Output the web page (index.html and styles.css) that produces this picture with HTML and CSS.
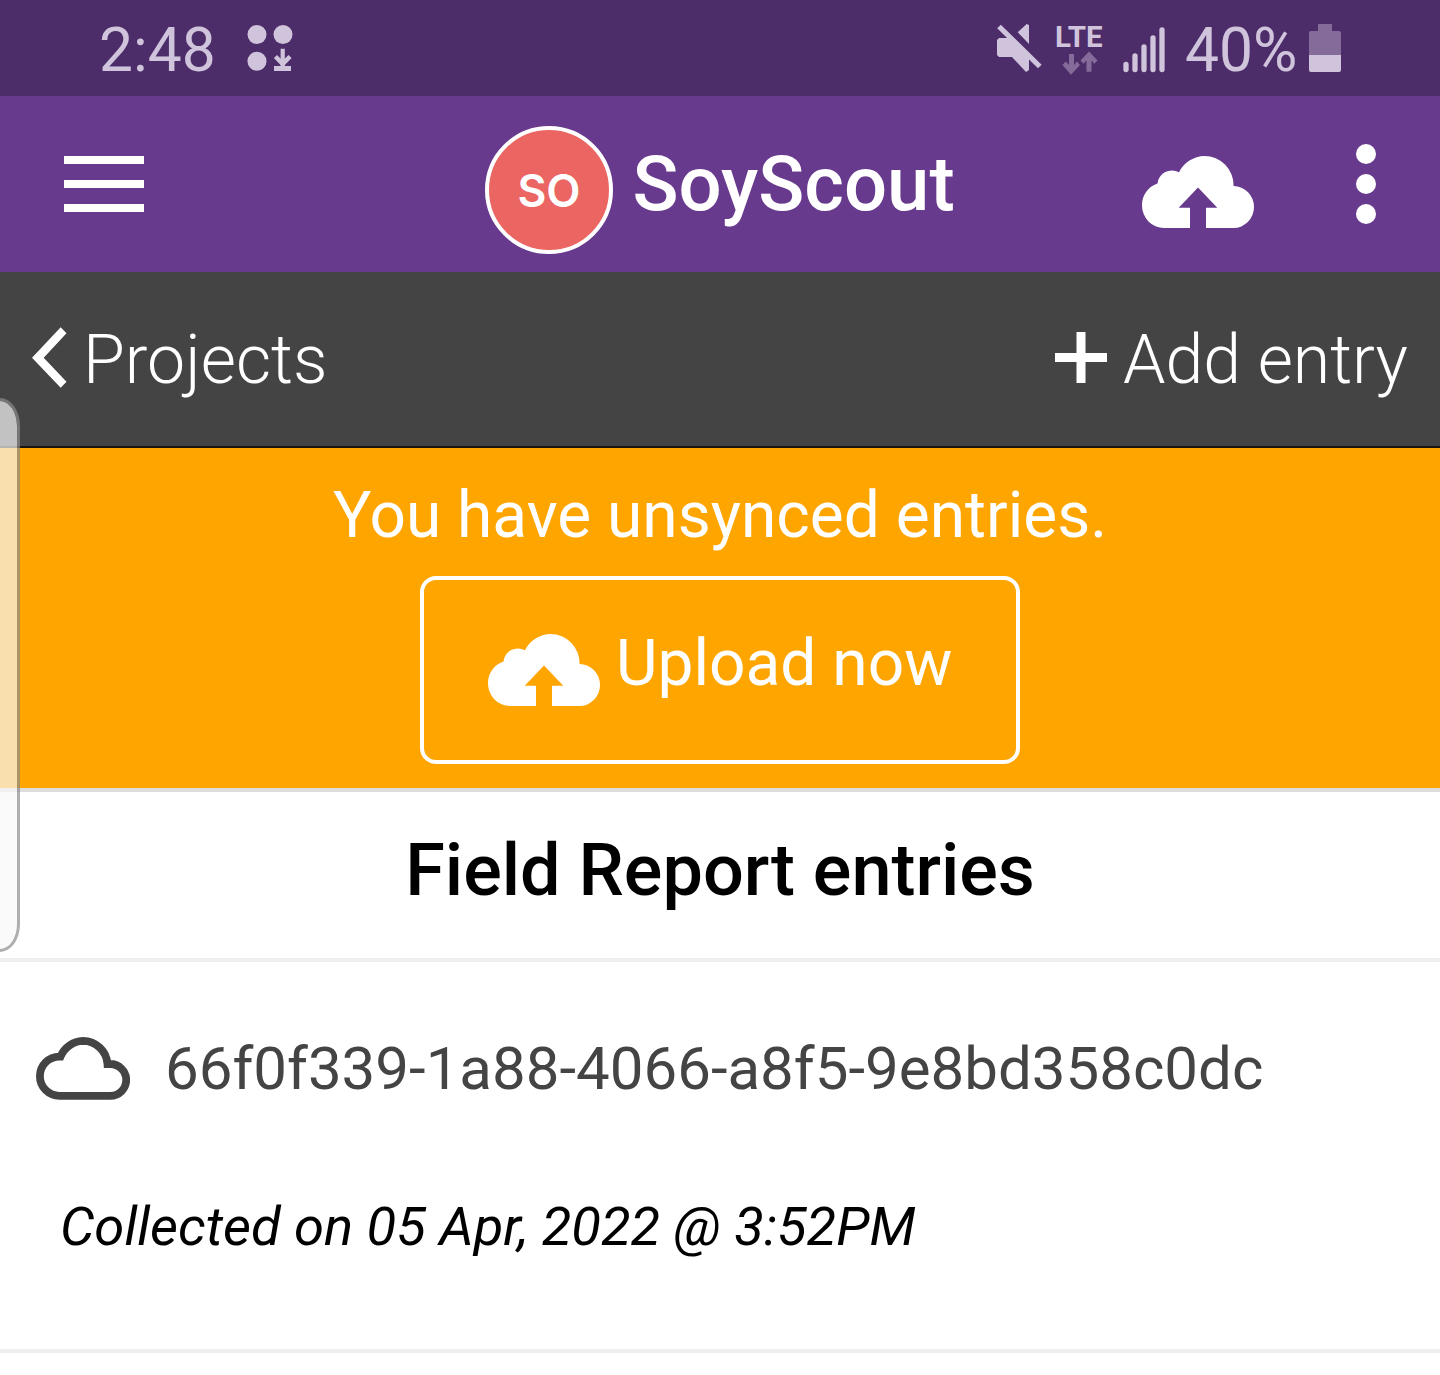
FILE: index.html
```html
<!DOCTYPE html>
<html lang="en">
<head>
<meta charset="utf-8">
<title>SoyScout</title>
<link rel="stylesheet" href="styles.css">
</head>
<body>
<header class="status">
  <span class="time">2:48</span>
  <svg class="dots" width="48" height="50" viewBox="0 0 48 50" fill="#d0c4dc"><circle cx="10" cy="10.500" r="9.500"/><circle cx="36" cy="10.500" r="9.500"/><circle cx="10" cy="37.300" r="9.500"/><path d="M33.600 24.700h4.200V42h-4.200zM27 42h17v5H27z"/><path d="M28.500 32.500l7.200 7.500 7.300-7.500" fill="none" stroke="#d0c4dc" stroke-width="4.500"/></svg>
  <svg class="mute" width="48" height="50" viewBox="0 0 48 50" fill="#d0c4dc"><path d="M1 16L3 14h11l19 19v13l-3 2L16 33H3l-2-2zM21.700 8.300L30.700 0 33 1v19z"/><path d="M3 2.500L43.800 42.500" stroke="#d0c4dc" stroke-width="5.200"/></svg>
  <div class="lte"><span>LTE</span><svg width="36" height="24" viewBox="0 0 36 24" fill="#846b99"><path d="M7 3h5v11l3-3.500 3 3.500-9 9.700L.5 14l3.200-3.500L7 14zM24.500 20.700V9.500l-3 3.300-3-3.300L27 .5l8.500 9-3.200 3.300-2.800-3.300v11.200z"/></svg></div>
  <svg class="signal" width="42" height="46" viewBox="0 0 42 46" stroke="#d0c4dc" stroke-width="5.300" stroke-linecap="round"><path d="M3 37.500v5M12 29v13.500M21 20v22.500M30 11v31.500M39 3v39.500"/></svg>
  <span class="percent">40%</span>
  <svg class="battery" width="32" height="48" viewBox="0 0 32 48"><path d="M9 0h14v7h7q2 0 2 2v22H0V9q0-2 2-2h7z" fill="#846b99"/><path d="M0 31h32v15q0 2-2 2H2q-2 0-2-2z" fill="#d0c4dc"/></svg>
</header>
<nav class="appbar">
  <svg class="menu" width="80" height="56" viewBox="0 0 80 56" fill="#fff"><path d="M0 0h80v8H0zM0 24h80v8H0zM0 48h80v8H0z"/></svg>
  <div class="avatar"><span>SO</span></div>
  <h1 class="brand">SoyScout</h1>
  <svg class="upload" width="112" height="72" viewBox="0 0 112 72" fill="#fff"><path d="M48 72H22A22 22.500 0 0 1 0 49.500A22.500 22.500 0 0 1 15.500 27.500A14.500 14.500 0 0 1 37 16.300A29.200 29.200 0 0 1 62.500 0A29.200 29.500 0 0 1 91.600 30A21 21 0 0 1 112 51A20.500 21 0 0 1 91.500 72H64V51.800H75.300L56 31.500 36.700 51.800H48z"/></svg>
  <svg class="more" width="20" height="80" viewBox="0 0 20 80" fill="#fff"><circle cx="10" cy="10" r="10"/><circle cx="10" cy="40" r="10"/><circle cx="10" cy="70" r="10"/></svg>
</nav>
<div class="toolbar">
  <svg class="back" width="36" height="62" viewBox="0 0 36 62"><path d="M0 30.700L28.700.3l5.800 6L11.700 30.700l22.800 24-5.800 6z" fill="#fff"/></svg>
  <span class="projects">Projects</span>
  <svg class="plus" width="52" height="52" viewBox="0 0 52 52"><path d="M26 0v51M0 25.500h52" stroke="#fff" stroke-width="9"/></svg>
  <span class="add">Add entry</span>
</div>
<section class="notice">
  <p class="message">You have unsynced entries.</p>
  <button class="button">
    <svg class="cloud-up" width="112" height="72" viewBox="0 0 112 72" fill="#fff"><path d="M48 72H22A22 22.500 0 0 1 0 49.500A22.500 22.500 0 0 1 15.500 27.500A14.500 14.500 0 0 1 37 16.300A29.200 29.200 0 0 1 62.500 0A29.200 29.500 0 0 1 91.600 30A21 21 0 0 1 112 51A20.500 21 0 0 1 91.500 72H64V51.800H75.300L56 31.500 36.700 51.800H48z"/></svg>
    <span>Upload now</span>
  </button>
</section>
<h2 class="heading">Field Report entries</h2>
<article class="entry">
  <div class="row">
    <svg class="cloud" width="94" height="63" viewBox="0 0 94 63"><path d="M23.500 58.800A19.600 19.600 0 0 1 23.500 19.600H24.500A25.500 25.500 0 0 1 47 3.900A24.700 24.700 0 0 1 71.500 27H74.300A15.900 15.900 0 0 1 74.300 58.800z" fill="none" stroke="#444" stroke-width="7.800"/></svg>
    <span class="uuid">66f0f339-1a88-4066-a8f5-9e8bd358c0dc</span>
  </div>
  <p class="date">Collected on 05 Apr, 2022 @ 3:52PM</p>
</article>
<div class="edge"></div>
</body>
</html>
```
FILE: styles.css
```css
* { box-sizing: border-box; }
body { margin: 0; width: 1440px; height: 1375px; overflow: hidden; position: relative; background: #fff; color: #000; font-family: Roboto, sans-serif; }
h1, h2, p { margin: 0; font-weight: 400; }
svg { display: block; flex: none; }
span, p, h1, h2 { white-space: nowrap; }
.status { height: 96px; display: flex; align-items: flex-start; background: #4d2d69; color: #d0c4dc; }
.time { font-size: 60.5px; line-height: 70px; margin: 16px 0 0 99px; width: 148px; }
.dots { margin-top: 24px; }
.mute { margin: 24px 0 0 701px; }
.lte { width: 50px; margin: 22px 0 0 11px; font-size: 29.5px; line-height: 30px; font-weight: 700; }
.lte span { display: block; height: 29px; }
.lte svg { margin: 0 0 0 7px; }
.signal { margin: 27px 0 0 17.5px; }
.percent { font-size: 60.5px; line-height: 70px; margin: 16px 0 0 20.5px; width: 124px; }
.battery { margin-top: 24px; }
.appbar { height: 176px; display: flex; align-items: flex-start; background: #673a8e; color: #fff; }
.menu { margin: 60px 0 0 64px; }
.avatar { width: 128px; height: 128px; margin: 30px 0 0 341px; padding-top: 2px; border: 4px solid #fff; border-radius: 50%; background: #eb6662; font-family: Inter, sans-serif; font-size: 44.5px; font-weight: 600; display: flex; align-items: center; justify-content: center; }
.brand { font-size: 76px; line-height: 90px; font-weight: 500; margin: 43px 0 0 19.5px; width: 509.5px; }
.upload { margin-top: 60px; }
.more { margin: 48px 0 0 102px; }
.toolbar { height: 176px; display: flex; align-items: flex-start; background: #444; border-bottom: 2px solid #1c140c; color: #fff; font-size: 68px; line-height: 82px; font-weight: 300; }
.back { margin: 55px 0 0 32px; }
.projects { margin: 47px 0 0 15px; width: 972px; }
.plus { margin-top: 60px; }
.add { margin: 47px 0 0 16px; }
.notice { height: 344px; padding-top: 30px; display: flex; flex-direction: column; align-items: center; background: #ffa500; border-bottom: 4px solid #ddd; color: #fff; }
.message { font-size: 64px; line-height: 76px; }
.button { width: 600px; height: 188px; margin-top: 22px; padding: 0 0 0 64px; display: flex; align-items: flex-start; background: none; border: 4px solid #fff; border-radius: 16px; color: #fff; font: 64px/76px Roboto, sans-serif; }
.cloud-up { margin-top: 54px; }
.button span { margin: 46px 0 0 16px; }
.heading { height: 170px; padding-top: 37px; font-size: 72px; line-height: 84px; font-weight: 500; text-align: center; border-bottom: 4px solid #eee; }
.entry { height: 391px; border-bottom: 4px solid #eee; }
.row { display: flex; align-items: flex-start; padding-left: 36px; height: 205px; }
.cloud { margin-top: 75px; }
.uuid { margin: 72px 0 0 35px; font-size: 60px; line-height: 70px; color: #444; }
.date { margin: 26px 0 0 60px; font-size: 54.4px; line-height: 68px; font-style: italic; }
.edge { position: absolute; left: -20px; top: 398px; width: 40px; height: 554px; border: 3px solid rgba(140,140,140,.7); border-radius: 20px / 28px; background: rgba(248,248,248,.7); background-clip: padding-box; }
```
